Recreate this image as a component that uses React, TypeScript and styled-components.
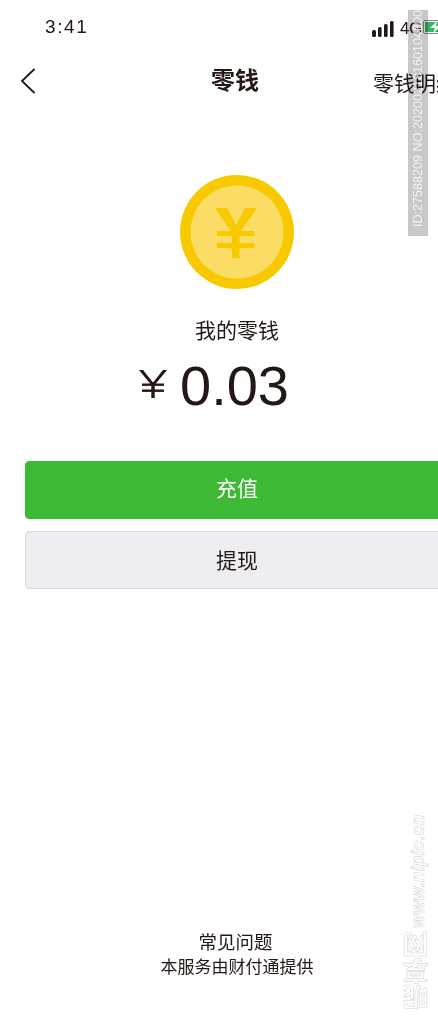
import React from 'react';
import styled, { createGlobalStyle } from 'styled-components';

const GlobalStyle = createGlobalStyle`
  html, body {
    margin: 0;
    padding: 0;
    background: #fff;
    overflow: hidden;
  }
  body {
    width: 438px;
    height: 1024px;
    font-family: "Liberation Sans", "Noto Sans CJK SC", sans-serif;
    color: #231815;
  }
`;

const Viewport = styled.div`
  position: relative;
  width: 438px;
  height: 1024px;
  overflow: hidden;
`;

const Page = styled.div`
  width: 474px;
  height: 1024px;
  display: flex;
  flex-direction: column;
`;

const StatusBar = styled.div`
  height: 54px;
  display: flex;
  align-items: center;
  justify-content: space-between;
  padding-left: 45px;
`;

const Time = styled.span`
  font-size: 19px;
  letter-spacing: 1.6px;
  color: #231815;
`;

const StatusIcons = styled.div`
  display: flex;
  align-items: center;
  gap: 6px;
  width: 102px;
  margin-top: 3px;
`;

const NetworkLabel = styled.span`
  font-size: 17px;
  color: #231815;
  letter-spacing: -0.4px;
  margin-right: -5px;
`;

const NavBar = styled.div`
  height: 54px;
  display: flex;
  align-items: center;
  padding-left: 20px;
`;

const BackButton = styled.div`
  width: 191px;
  display: flex;
  align-items: center;
`;

const NavTitle = styled.h1`
  margin: 0;
  width: 162px;
  font-size: 24px;
  font-weight: 700;
  line-height: 54px;
`;

const NavAction = styled.span`
  font-size: 21px;
  white-space: nowrap;
  padding-top: 2px;
`;

const Balance = styled.div`
  display: flex;
  flex-direction: column;
  align-items: center;
  padding-top: 67px;
`;

const CoinIcon = styled.svg`
  display: block;
  width: 114px;
  height: 114px;
`;

const BalanceLabel = styled.div`
  margin-top: 27px;
  font-size: 21px;
  line-height: 30px;
  color: #231815;
`;

const Amount = styled.div`
  display: flex;
  align-items: center;
  gap: 13px;
  margin-top: 8px;
  margin-right: 46px;
  height: 64px;
  font-size: 56px;
  line-height: 64px;
  color: #231815;
`;

const YenGlyph = styled.svg`
  display: block;
  width: 28px;
  height: 28px;
  margin-bottom: 4px;
`;

const Actions = styled.div`
  display: flex;
  flex-direction: column;
  gap: 12px;
  margin-top: 43px;
  padding-left: 25px;
`;

const ActionButton = styled.button<{ $primary?: boolean }>`
  width: 424px;
  height: 58px;
  padding: 0 0 ${p => (p.$primary ? '6px' : '2px')};
  border-radius: 4px;
  border: 1px solid ${p => (p.$primary ? '#3eb936' : '#dcdcde')};
  background: ${p => (p.$primary ? '#3eb936' : '#eeeef2')};
  color: ${p => (p.$primary ? '#fff' : '#231815')};
  font-family: inherit;
  font-size: 21px;
`;

const Footer = styled.div`
  margin-top: auto;
  margin-bottom: 44px;
  display: flex;
  flex-direction: column;
  align-items: center;
  line-height: 25px;
  color: #231815;
`;

const FooterLink = styled.span`
  font-size: 18.5px;
  margin-right: 3px;
`;

const FooterNote = styled.span`
  font-size: 17px;
`;

const StampBand = styled.div`
  position: absolute;
  left: 408px;
  top: 10px;
  width: 20px;
  height: 226px;
  background: #c8c8c8;
  mix-blend-mode: multiply;
`;

const IdStamp = styled.div`
  position: absolute;
  left: 408px;
  top: 10px;
  width: 20px;
  height: 226px;
  color: rgba(255, 255, 255, 0.8);
  font-size: 12.6px;
  line-height: 20px;
  writing-mode: vertical-rl;
  transform: rotate(180deg);
  white-space: nowrap;
  overflow: hidden;
  padding-top: 9px;
  box-sizing: border-box;
`;

const SiteMark = styled.div`
  position: absolute;
  left: 406px;
  top: 812px;
  height: 198px;
  display: flex;
  flex-direction: row;
  align-items: center;
  gap: 4px;
  writing-mode: vertical-rl;
  transform: rotate(180deg);
  white-space: nowrap;
  line-height: 24px;
  font-weight: 700;
  color: #fff;
  -webkit-text-stroke: 0.6px #d6d6d6;
`;

const SiteName = styled.span`
  font-size: 26px;
`;

const SiteUrl = styled.span`
  font-size: 17.5px;
  font-style: italic;
  letter-spacing: 0.2px;
`;

const SignalIcon = () => (
  <svg width="22" height="16" viewBox="0 0 22 16">
    <rect x="0" y="9" width="4" height="7" rx="1.5" fill="#231815" />
    <rect x="6" y="6" width="3.6" height="10" rx="1.5" fill="#231815" />
    <rect x="12" y="3" width="3.6" height="13" rx="1.5" fill="#231815" />
    <rect x="18" y="0" width="3.6" height="16" rx="1.5" fill="#231815" />
  </svg>
);

const BatteryIcon = () => (
  <svg width="34" height="14" viewBox="0 0 34 14" style={{ marginBottom: 4 }}>
    <rect x="0.5" y="0.5" width="30" height="13" rx="1.5" fill="none" stroke="#8a8a8a" />
    <rect x="2" y="2" width="27" height="10" fill="#35b45f" />
    <path d="M14 1 L7 8 H12 L10 13 L18 6 H13 Z" fill="#fff" />
  </svg>
);

const BackIcon = () => (
  <svg width="16" height="26" viewBox="0 0 16 26">
    <path d="M14.5 1 L2 13 L14.5 25" fill="none" stroke="#231815" strokeWidth="1.8" />
  </svg>
);

const Coin = () => (
  <CoinIcon viewBox="0 0 114 114">
    <circle cx="57" cy="57" r="57" fill="#f9c900" />
    <circle cx="57" cy="57" r="46.5" fill="#fbdc64" />
    <g fill="#f9c900">
      <path d="M35 33 H47 L56 50 L65 33 H77 L59.5 58 V83 H52 V58 Z" />
      <rect x="37" y="56" width="37" height="5" />
      <rect x="37" y="68" width="37" height="5" />
    </g>
  </CoinIcon>
);

const Yen = () => (
  <YenGlyph viewBox="0 0 28 28">
    <g fill="#231815">
      <path d="M0 0 H4 L14 12.5 L24 0 H28 L15.7 15 V28 H12.3 V15 Z" />
      <rect x="3" y="13.5" width="22" height="2.4" />
      <rect x="3" y="19.5" width="22" height="2.4" />
    </g>
  </YenGlyph>
);

export default function App() {
  return (
    <>
      <GlobalStyle />
      <Viewport>
        <Page>
          <StatusBar>
            <Time>3:41</Time>
            <StatusIcons>
              <SignalIcon />
              <NetworkLabel>4G</NetworkLabel>
              <BatteryIcon />
            </StatusIcons>
          </StatusBar>
          <NavBar>
            <BackButton>
              <BackIcon />
            </BackButton>
            <NavTitle>零钱</NavTitle>
            <NavAction>零钱明细</NavAction>
          </NavBar>
          <Balance>
            <Coin />
            <BalanceLabel>我的零钱</BalanceLabel>
            <Amount>
              <Yen />
              <span>0.03</span>
            </Amount>
          </Balance>
          <Actions>
            <ActionButton $primary>充值</ActionButton>
            <ActionButton>提现</ActionButton>
          </Actions>
          <Footer>
            <FooterLink>常见问题</FooterLink>
            <FooterNote>本服务由财付通提供</FooterNote>
          </Footer>
        </Page>
        <StampBand />
        <IdStamp>ID:27588209 NO:20200218160104800</IdStamp>
        <SiteMark>
          <SiteName>昵享网</SiteName>
          <SiteUrl>www.nipic.cn</SiteUrl>
        </SiteMark>
      </Viewport>
    </>
  );
}
